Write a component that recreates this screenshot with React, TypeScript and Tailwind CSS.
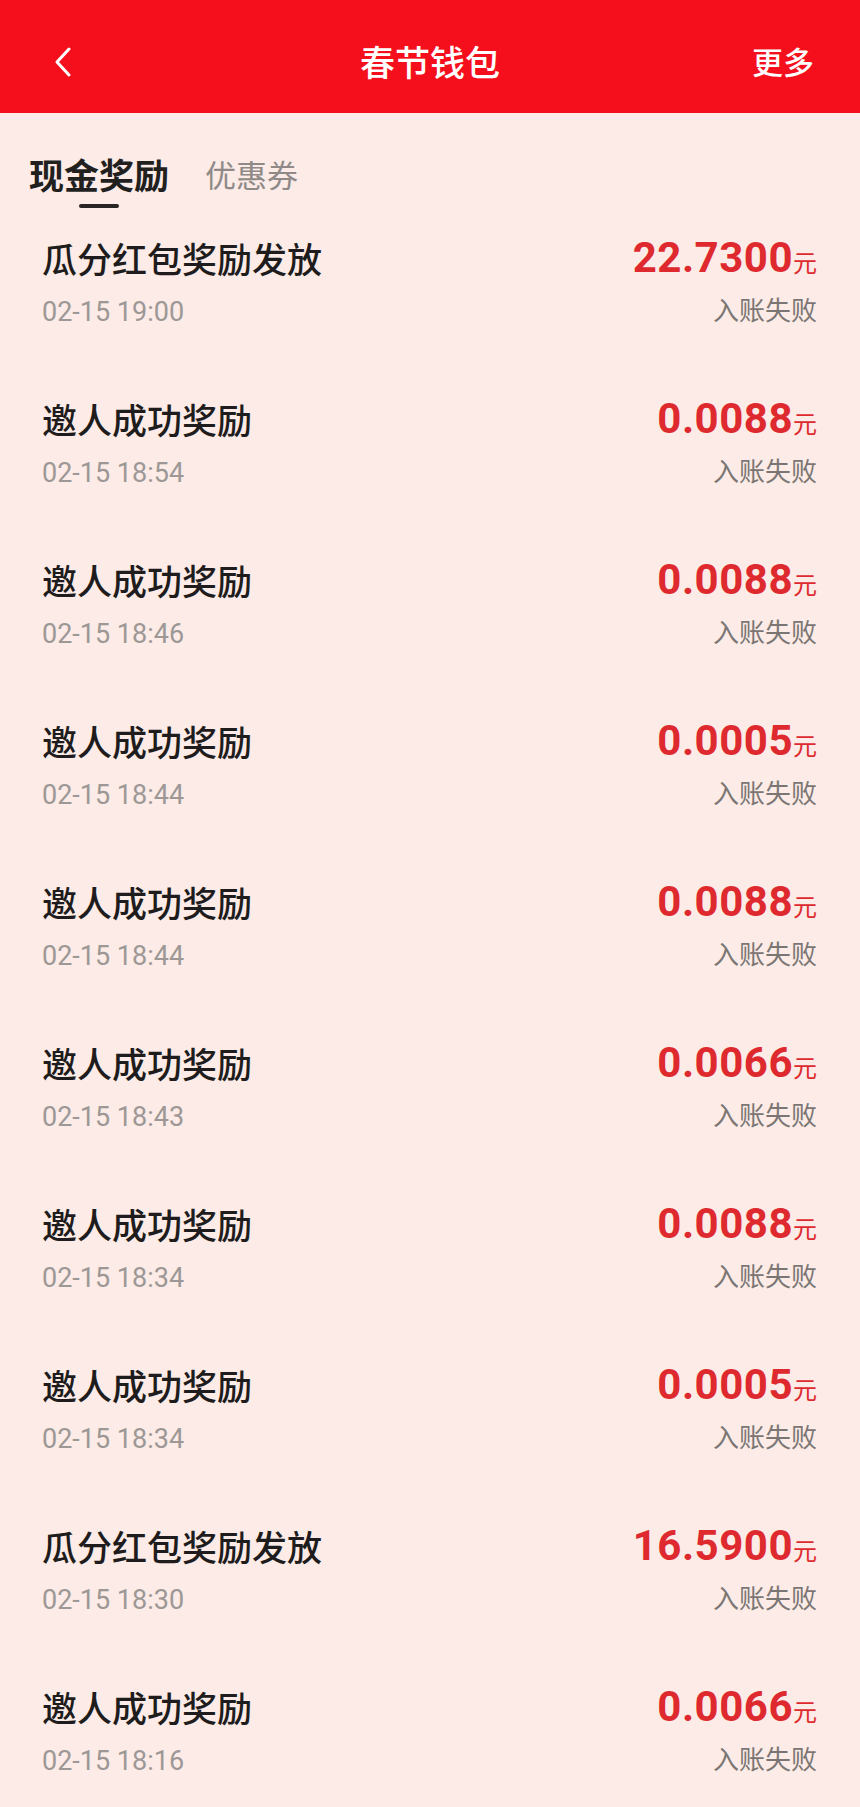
import React from 'react';

interface Record {
  title: string;
  time: string;
  amount: string;
}

const records: Record[] = [
  { title: '瓜分红包奖励发放', time: '02-15 19:00', amount: '22.7300' },
  { title: '邀人成功奖励', time: '02-15 18:54', amount: '0.0088' },
  { title: '邀人成功奖励', time: '02-15 18:46', amount: '0.0088' },
  { title: '邀人成功奖励', time: '02-15 18:44', amount: '0.0005' },
  { title: '邀人成功奖励', time: '02-15 18:44', amount: '0.0088' },
  { title: '邀人成功奖励', time: '02-15 18:43', amount: '0.0066' },
  { title: '邀人成功奖励', time: '02-15 18:34', amount: '0.0088' },
  { title: '邀人成功奖励', time: '02-15 18:34', amount: '0.0005' },
  { title: '瓜分红包奖励发放', time: '02-15 18:30', amount: '16.5900' },
  { title: '邀人成功奖励', time: '02-15 18:16', amount: '0.0066' },
];

const RecordRow: React.FC<{ item: Record }> = ({ item }) => (
  <div className="flex h-[161px] shrink-0 items-start justify-between pl-[42px] pr-[43px]">
    <div className="flex flex-col">
      <span className="text-[35px] leading-[40px] font-medium text-[#1e1c1c]">{item.title}</span>
      <span className="mt-[18px] font-['Roboto','Noto_Sans_CJK_SC',sans-serif] text-[27px] leading-[32px] text-[#9d9896]">
        {item.time}
      </span>
    </div>
    <div className="flex flex-col items-end">
      <span className="flex items-baseline leading-[40px] text-[#de2a2f]">
        <span className="font-['Roboto',sans-serif] text-[42px] font-bold tracking-[0.5px]">{item.amount}</span>
        <span className="text-[24px]">元</span>
      </span>
      <span className="mt-[12px] text-[26px] leading-[30px] text-[#7b7674]">入账失败</span>
    </div>
  </div>
);

export default function App() {
  return (
    <div className="flex h-[1807px] w-full flex-col overflow-hidden bg-[#fcebe6] font-['Noto_Sans_CJK_SC',sans-serif]">
      {/* top bar */}
      <div className="relative flex h-[113px] shrink-0 items-center justify-between bg-[#f50f1d] pt-[10px] pl-[54px] pr-[46px] text-white">
        <button className="flex h-[30px] w-[20px] items-center">
          <svg width="18" height="30" viewBox="0 0 18 30" fill="none">
            <polyline points="15,2 3,15 15,28" stroke="#fff" strokeWidth="3" strokeLinecap="round" strokeLinejoin="round" />
          </svg>
        </button>
        <span className="absolute left-1/2 top-[10px] flex h-[103px] -translate-x-1/2 items-center text-[35px] font-medium">
          春节钱包
        </span>
        <span className="text-[31px] font-medium">更多</span>
      </div>

      {/* tabs */}
      <div className="flex shrink-0 items-start gap-[36px] pt-[41px] pl-[29px]">
        <div className="flex flex-col items-center">
          <span className="text-[35px] leading-[40px] font-bold text-[#221f1f]">现金奖励</span>
          <span className="mt-[10px] h-[4px] w-[40px] rounded-full bg-[#2a2525]" />
        </div>
        <span className="text-[31px] leading-[40px] text-[#8f8a88]">优惠券</span>
      </div>

      {/* list */}
      <div className="mt-[30px] flex flex-col">
        {records.map((r, i) => (
          <RecordRow key={i} item={r} />
        ))}
      </div>
    </div>
  );
}
